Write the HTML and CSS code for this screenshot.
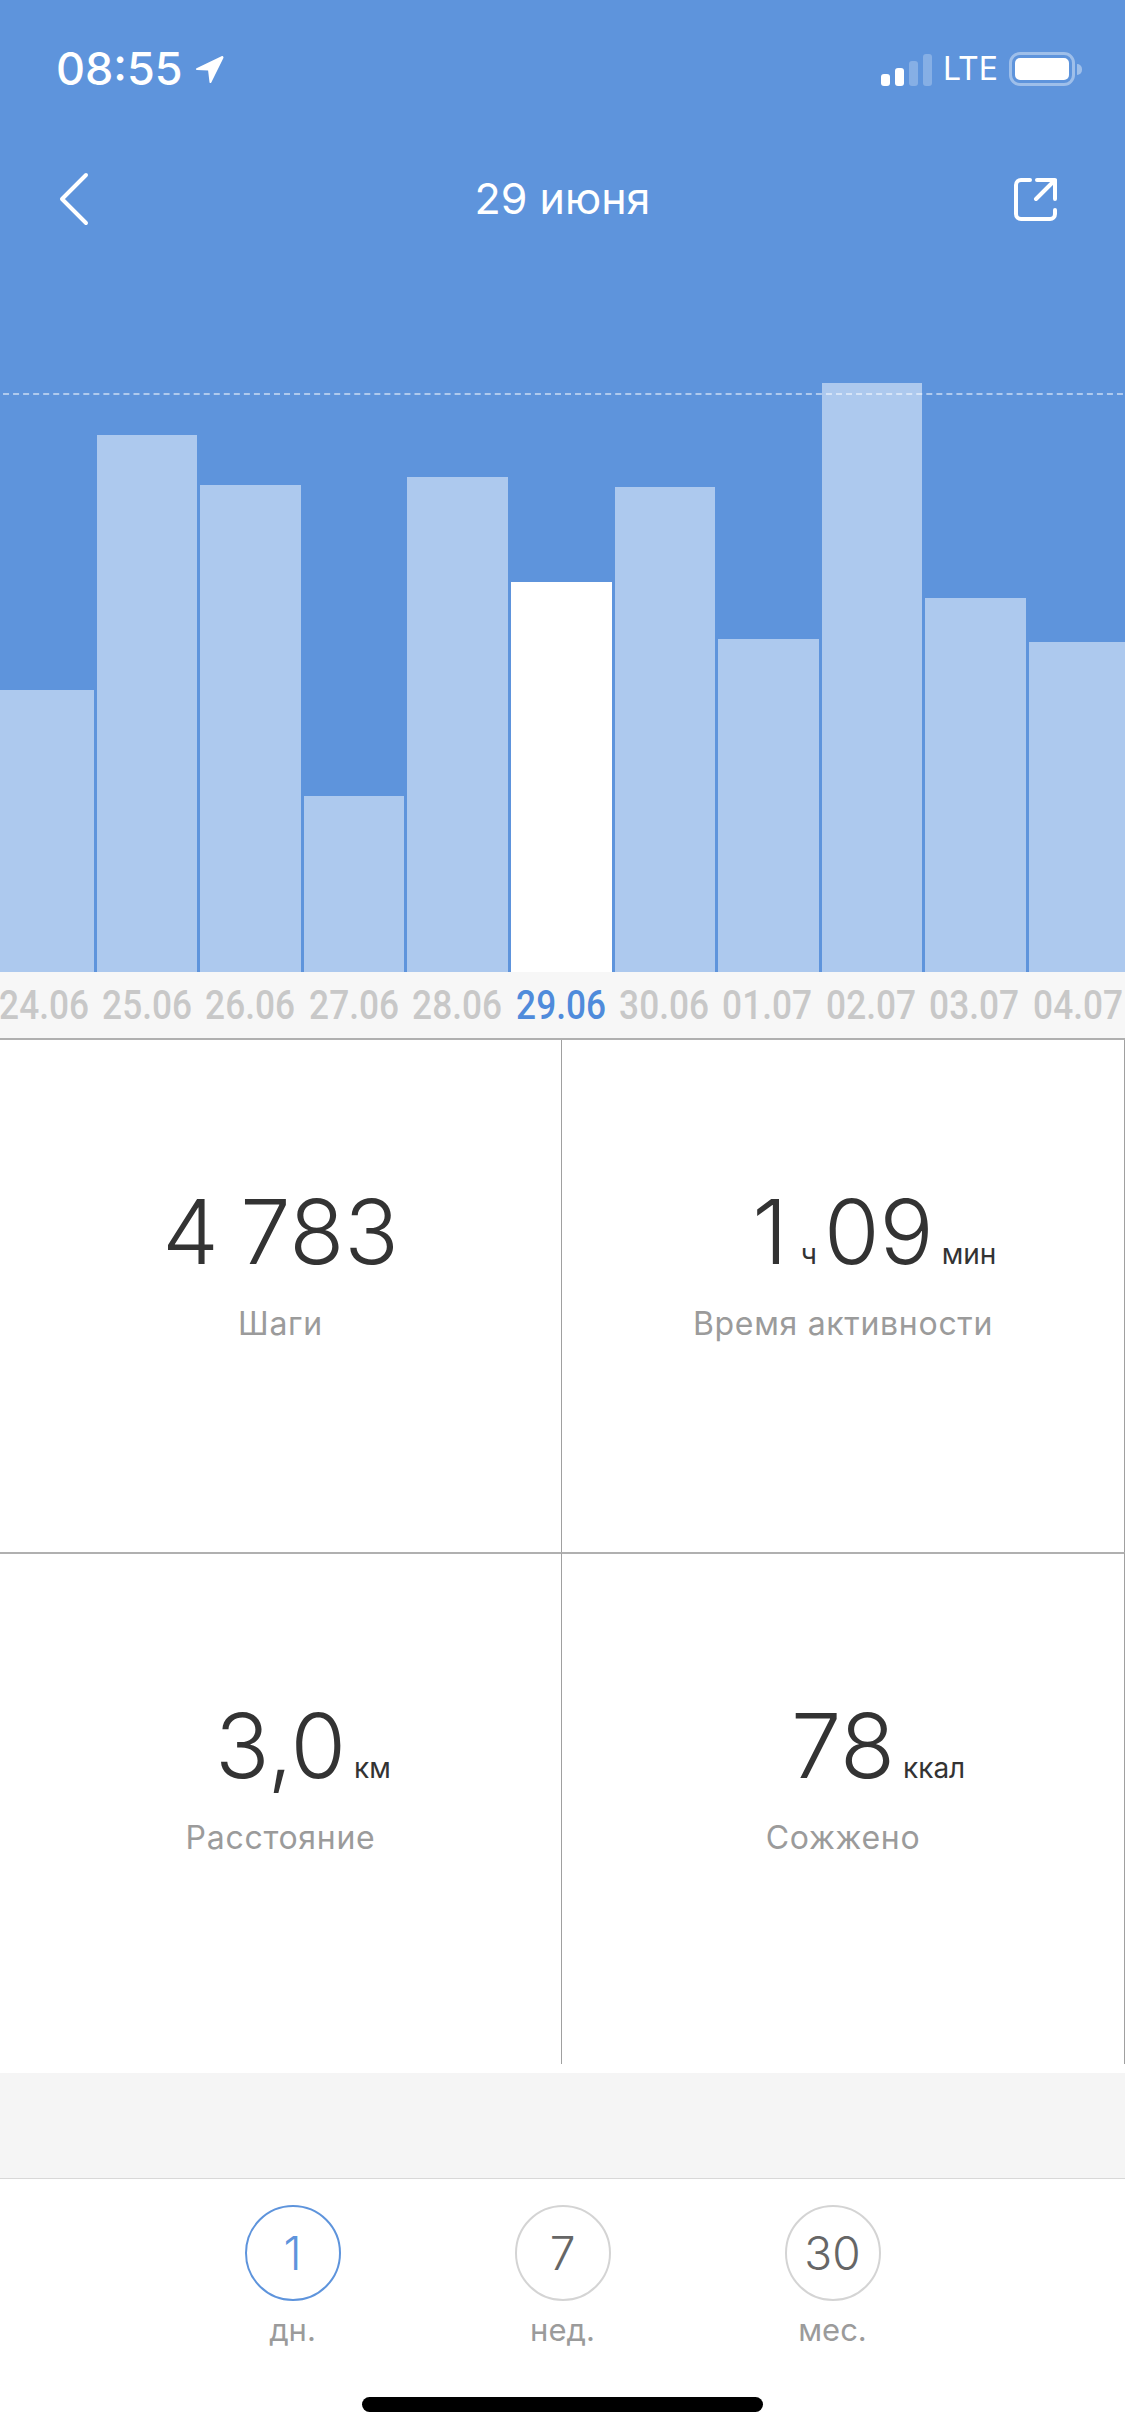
FILE: index.html
```
<!DOCTYPE html>
<html lang="ru">
<head>
<meta charset="utf-8">
<title>29 июня</title>
<link rel="stylesheet" href="styles.css">
</head>
<body>
<div class="phone">
  <section class="hero">
    <div class="status">
      <div class="status-left">
        <span class="time">08:55</span>
        <svg class="loc" viewBox="0 0 29 29"><path d="M27 1 1.5 13.2c-1 .6-.6 1.8.4 1.8l11.2.6 1.4 11.6c.1 1 1.4 1.2 1.8.3L28.4 3c.4-1.2-.4-2.4-1.4-2z" fill="#fff"/></svg>
      </div>
      <div class="status-right">
        <div class="signal">
          <i class="s1"></i><i class="s2"></i><i class="s3"></i><i class="s4"></i>
        </div>
        <span class="lte">LTE</span>
        <div class="battery"><div class="battery-fill"></div></div>
        <div class="battery-nub"></div>
      </div>
    </div>
    <div class="nav">
      <svg class="back" viewBox="0 0 32 54"><path d="M28 3 4 27l24 24" fill="none" stroke="#fff" stroke-width="4" stroke-linecap="round" stroke-linejoin="round"/></svg>
      <span class="title">29 июня</span>
      <svg class="share" viewBox="0 0 44 44"><path d="M17 3H8a5 5 0 0 0-5 5v29a5 5 0 0 0 5 5h29a5 5 0 0 0 5-5v-4M24 3h18v19M42 3 23 22" fill="none" stroke="#fff" stroke-width="4" stroke-linecap="round" stroke-linejoin="round"/></svg>
    </div>
    <div class="chart">
      <div class="goal"></div>
      <div class="bar" style="height:282px"></div>
      <div class="bar" style="height:537px"></div>
      <div class="bar" style="height:487px"></div>
      <div class="bar" style="height:176px"></div>
      <div class="bar" style="height:495px"></div>
      <div class="bar bar-on" style="height:390px"></div>
      <div class="bar" style="height:485px"></div>
      <div class="bar" style="height:333px"></div>
      <div class="bar" style="height:589px"></div>
      <div class="bar" style="height:374px"></div>
      <div class="bar" style="height:330px"></div>
    </div>
  </section>
  <div class="dates">
    <span class="date">24.06</span><span class="date">25.06</span><span class="date">26.06</span><span class="date">27.06</span><span class="date">28.06</span><span class="date date-on">29.06</span><span class="date">30.06</span><span class="date">01.07</span><span class="date">02.07</span><span class="date">03.07</span><span class="date">04.07</span>
  </div>
  <div class="stats">
    <div class="cell">
      <div class="value value-spaced">4 783</div>
      <div class="label">Шаги</div>
    </div>
    <div class="cell">
      <div class="value">1<small class="unit unit-mid">ч</small>09<small class="unit unit-end">мин</small></div>
      <div class="label">Время активности</div>
    </div>
    <div class="cell">
      <div class="value">3,0<small class="unit unit-end">км</small></div>
      <div class="label">Расстояние</div>
    </div>
    <div class="cell">
      <div class="value">78<small class="unit unit-end">ккал</small></div>
      <div class="label">Сожжено</div>
    </div>
  </div>
  <div class="band"></div>
  <div class="tabs">
    <div class="tab tab-on"><div class="circle">1</div><div class="tab-label">дн.</div></div>
    <div class="tab"><div class="circle">7</div><div class="tab-label">нед.</div></div>
    <div class="tab"><div class="circle">30</div><div class="tab-label">мес.</div></div>
  </div>
  <div class="home-wrap"><div class="home"></div></div>
</div>
</body>
</html>
```
FILE: styles.css
```
* { box-sizing: border-box; }
html, body { margin: 0; padding: 0; background: #fff; }
.phone {
  width: 1125px;
  height: 2436px;
  display: flex;
  flex-direction: column;
  overflow: hidden;
  font-family: Inter, "Noto Sans", sans-serif;
  background: #fff;
}
.hero {
  height: 972px;
  background: #5e94dc;
  display: flex;
  flex-direction: column;
  flex: none;
}
.status {
  height: 138px;
  padding: 52px 43px 0 56px;
  display: flex;
  justify-content: space-between;
  align-items: flex-start;
  color: #fff;
}
.status-left { display: flex; align-items: center; gap: 12px; height: 34px; }
.time { font-size: 45px; font-weight: 500; line-height: 34px; }
.loc { width: 29px; height: 29px; }
.status-right { display: flex; align-items: center; height: 34px; }
.signal { display: flex; align-items: flex-end; gap: 5px; height: 33px; margin-right: 11px; }
.signal i { display: block; width: 9px; border-radius: 3px; background: #fff; }
.s1 { height: 12px; }
.s2 { height: 18px; }
.s3 { height: 25px; opacity: .25; }
.s4 { height: 32px; opacity: .25; }
.lte { font-size: 32px; font-weight: 400; line-height: 34px; margin-right: 11px; }
.battery {
  width: 66px;
  height: 34px;
  border: 3px solid rgba(255,255,255,.4);
  border-radius: 11px;
  padding: 3px;
}
.battery-fill { width: 100%; height: 100%; background: #fff; border-radius: 5px; }
.battery-nub { width: 5px; height: 11px; margin-left: 2px; background: rgba(255,255,255,.4); border-radius: 0 5px 5px 0; }
.nav {
  height: 122px;
  padding: 0 68px 0 58px;
  display: grid;
  grid-template-columns: 1fr auto 1fr;
  align-items: center;
  color: #fff;
}
.back { width: 32px; height: 54px; }
.share { width: 44px; height: 44px; justify-self: end; }
.title { font-size: 43px; font-weight: 400; margin-left: 10px; margin-top: -2px; }
.chart {
  position: relative;
  flex: 1;
  display: grid;
  grid-template-columns: repeat(11, 100.6px);
  column-gap: 3px;
  align-items: end;
  margin: 0 -8px 0 -7px;
}
.goal {
  position: absolute;
  left: 0;
  right: 0;
  top: 133px;
  border-top: 2px dashed rgba(255,255,255,.5);
}
.bar { background: #adc9ee; }
.bar-on { background: #fff; }
.dates {
  height: 68px;
  flex: none;
  margin: 0 -6px 0 -8px;
  background: #f7f7f7;
  display: grid;
  grid-template-columns: repeat(11, 103.4px);
  align-items: center;
  justify-items: center;
  border-bottom: 2px solid #b0b0b0;
  font-family: Roboto, "Noto Sans", sans-serif;
  font-weight: 500;
  font-size: 40px;
  color: #c8c8c8;
}
.date { display: block; transform: scaleX(.88); }
.date-on { color: #4f8bdb; }
.stats {
  flex: none;
  display: grid;
  grid-template-columns: 562px 563px;
  grid-auto-rows: 512px;
}
.cell {
  padding-top: 137px;
  border-right: 1px solid #a0a0a0;
  display: flex;
  flex-direction: column;
  align-items: center;
}
.cell:nth-child(n+3) { border-top: 2px solid #b0b0b0; }
.value {
  font-size: 90px;
  line-height: 110px;
  font-weight: 300;
  color: #333;
  white-space: nowrap;
}
.value-spaced { word-spacing: -4px; }
.unit { font-size: 28px; font-weight: 400; line-height: 1; }
.unit-mid { margin: 0 7px 0 13px; }
.unit-end { display: inline-block; width: 0; margin-left: 8px; margin-right: -8px; }
.label { margin-top: 15px; font-size: 32px; color: #9b9b9b; line-height: 44px; letter-spacing: .7px; }
.band { height: 106px; margin-top: 9px; flex: none; background: #f5f5f5; border-bottom: 1px solid #d8d8d8; }
.tabs { flex: none; display: flex; justify-content: center; padding-top: 26px; }
.tab { width: 270px; display: flex; flex-direction: column; align-items: center; color: #666; }
.circle {
  width: 96px;
  height: 96px;
  border: 2px solid #d4d4d4;
  border-radius: 50%;
  display: flex;
  align-items: center;
  justify-content: center;
  font-size: 46px;
  font-weight: 300;
}
.tab-on { color: #5e94dc; }
.tab-on .circle { border-color: #5e94dc; }
.tab-label { margin-top: 9px; font-size: 31px; line-height: 40px; color: #9b9b9b; }
.home-wrap { flex: 1; display: flex; justify-content: center; padding-top: 47px; }
.home { width: 401px; height: 15px; border-radius: 8px; background: #000; }
```
